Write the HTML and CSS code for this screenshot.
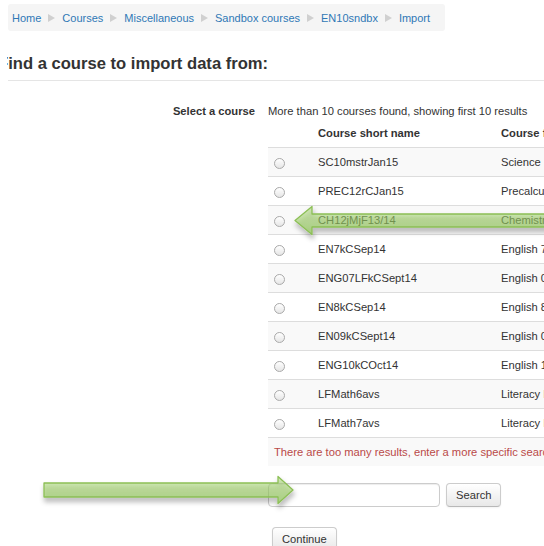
FILE: index.html
```html
<!DOCTYPE html>
<html lang="en">
<head>
<meta charset="utf-8">
<title>Import</title>
<link rel="stylesheet" href="styles.css">
</head>
<body>
<div class="page">
  <nav class="breadcrumb">
    <a href="#">Home</a><span class="sep"></span>
    <a href="#">Courses</a><span class="sep"></span>
    <a href="#">Miscellaneous</a><span class="sep"></span>
    <a href="#">Sandbox courses</a><span class="sep"></span>
    <a href="#">EN10sndbx</a><span class="sep"></span>
    <a href="#">Import</a>
  </nav>

  <div class="heading-wrap">
    <h2 class="heading">Find a course to import data from:</h2>
  </div>
  <hr class="rule">

  <form class="import-form">
    <div class="fitem">
      <div class="flabel">Select a course</div>
      <div class="felement">
        <div class="found">More than 10 courses found, showing first 10 results</div>
        <table class="courses">
          <thead>
            <tr><th class="c-radio"></th><th class="c-short">Course short name</th><th class="c-full">Course full name</th></tr>
          </thead>
          <tbody>
            <tr><td class="c-radio"><input type="radio" name="course"></td><td>SC10mstrJan15</td><td>Science 10 Master Jan15</td></tr>
            <tr><td class="c-radio"><input type="radio" name="course"></td><td>PREC12rCJan15</td><td>Precalculus 12 Jan15</td></tr>
            <tr><td class="c-radio"><input type="radio" name="course"></td><td>CH12jMjF13/14</td><td>Chemistry 12 F13/14</td></tr>
            <tr><td class="c-radio"><input type="radio" name="course"></td><td>EN7kCSep14</td><td>English 7 Sep14</td></tr>
            <tr><td class="c-radio"><input type="radio" name="course"></td><td>ENG07LFkCSept14</td><td>English 07 LF Sept14</td></tr>
            <tr><td class="c-radio"><input type="radio" name="course"></td><td>EN8kCSep14</td><td>English 8 Sep14</td></tr>
            <tr><td class="c-radio"><input type="radio" name="course"></td><td>EN09kCSept14</td><td>English 09 Sept14</td></tr>
            <tr><td class="c-radio"><input type="radio" name="course"></td><td>ENG10kCOct14</td><td>English 10 Oct14</td></tr>
            <tr><td class="c-radio"><input type="radio" name="course"></td><td>LFMath6avs</td><td>Literacy Foundations Math 6</td></tr>
            <tr><td class="c-radio"><input type="radio" name="course"></td><td>LFMath7avs</td><td>Literacy Foundations Math 7</td></tr>
            <tr><td colspan="3" class="too-many">There are too many results, enter a more specific search.</td></tr>
          </tbody>
        </table>
        <div class="search-row">
          <input type="text" class="search-input">
          <button type="button" class="btn">Search</button>
        </div>
        <div class="continue-row">
          <button type="button" class="btn">Continue</button>
        </div>
      </div>
    </div>
  </form>
</div>

<svg class="callouts" width="544" height="546" viewBox="0 0 544 546" aria-hidden="true">
  <defs>
    <linearGradient id="arrowFill" x1="0" y1="0" x2="0" y2="1">
      <stop offset="0" stop-color="rgb(170,214,120)" stop-opacity="0.5"/>
      <stop offset="1" stop-color="rgb(140,198,80)" stop-opacity="0.62"/>
    </linearGradient>
    <filter id="arrowShadow" x="-10%" y="-50%" width="120%" height="220%">
      <feDropShadow dx="1" dy="4" stdDeviation="2.6" flood-color="#000" flood-opacity="0.38"/>
    </filter>
  </defs>
  <!-- pointing left at the third course row -->
  <path d="M295 220.5 L312 206.5 L312 214 L560 214 L560 227 L312 227 L312 234.5 Z"
        fill="url(#arrowFill)" stroke="#8cbf55" stroke-width="1.3" stroke-linejoin="round" filter="url(#arrowShadow)"/>
  <!-- pointing right at the search box -->
  <path d="M44 483 L278 483 L278 476.5 L293 490 L278 503.5 L278 497 L44 497 Z"
        fill="url(#arrowFill)" stroke="#8cbf55" stroke-width="1.3" stroke-linejoin="round" filter="url(#arrowShadow)"/>
</svg>
</body>
</html>
```

FILE: styles.css
```css
html, body {
  margin: 0;
  padding: 0;
  overflow: hidden;
  background: #fff;
}

body {
  position: relative;
  width: 544px;
  height: 546px;
  font-family: "Liberation Sans", Arial, sans-serif;
  font-size: 11.2px;
  line-height: 16px;
  color: #333;
}

.page {
  padding-left: 8px;
}

/* breadcrumb bar */
.breadcrumb {
  display: flex;
  align-items: center;
  box-sizing: border-box;
  width: 437px;
  height: 27px;
  margin-top: 4px;
  padding: 0 4px;
  background: #f5f5f5;
  border-radius: 3px;
  font-size: 11px;
}

.breadcrumb a {
  color: #2f78b5;
  text-decoration: none;
}

.breadcrumb .sep {
  width: 0;
  height: 0;
  margin: 0 7px;
  border-left: 7px solid #d0d0d0;
  border-top: 4.5px solid transparent;
  border-bottom: 4.5px solid transparent;
}

/* page heading, clipped at the content edge */
.heading-wrap {
  overflow: hidden;
  margin-top: 23px;
  margin-left: -1px;
}

.heading {
  margin: 0 0 0 -9px;
  font-size: 16.6px;
  line-height: 20px;
  font-weight: bold;
  color: #333;
  white-space: nowrap;
}

.rule {
  margin: 6px 0 0 0;
  border: 0;
  border-top: 1px solid #e5e5e5;
  height: 0;
}

/* form row: label column + element column */
.import-form {
  margin-top: 22px;
}

.fitem {
  display: grid;
  grid-template-columns: 247px 1fr;
  column-gap: 13px;
}

.flabel {
  text-align: right;
  font-weight: bold;
}

.felement {
  min-width: 0;
}

.found {
  white-space: nowrap;
}

/* course list */
.courses {
  border-collapse: collapse;
  border-spacing: 0;
  width: 420px;
  table-layout: fixed;
}

.courses th,
.courses td {
  padding: 6px;
  line-height: 16px;
  text-align: left;
  white-space: nowrap;
  overflow: hidden;
}

.courses th {
  font-weight: bold;
}

.courses td {
  border-top: 1px solid #ddd;
}

.courses .c-radio {
  width: 32px;
}

.courses .c-short {
  width: 171px;
}

.courses tbody tr:nth-child(odd) td {
  background: #f9f9f9;
}

.courses input[type="radio"] {
  appearance: none;
  -webkit-appearance: none;
  display: block;
  box-sizing: border-box;
  width: 11px;
  height: 11px;
  margin: 2px 0 0 0;
  border: 1px solid #aaa;
  border-radius: 50%;
  background: linear-gradient(#ffffff, #e6e6e6);
}

.too-many {
  color: #b94a48;
}

/* search and continue */
.search-row {
  display: flex;
  gap: 6px;
  margin-top: 17px;
}

.search-input {
  box-sizing: border-box;
  width: 172px;
  height: 24px;
  margin: 0;
  border: 1px solid #ccc;
  border-radius: 4px;
  box-shadow: inset 0 1px 1px rgba(0, 0, 0, 0.075);
  background: #fff;
}

.btn {
  box-sizing: border-box;
  height: 24px;
  margin: 0;
  padding: 0 9px;
  font-family: "Liberation Sans", Arial, sans-serif;
  font-size: 11.2px;
  color: #333;
  border: 1px solid #ccc;
  border-bottom-color: #b8b8b8;
  border-radius: 4px;
  background: linear-gradient(#ffffff, #e8e8e8);
  box-shadow: inset 0 1px 0 rgba(255, 255, 255, 0.2), 0 1px 2px rgba(0, 0, 0, 0.05);
}

.continue-row {
  margin-top: 20px;
  padding-left: 4px;
}

/* annotation arrows drawn over the page */
.callouts {
  position: absolute;
  left: 0;
  top: 0;
  pointer-events: none;
}
```
